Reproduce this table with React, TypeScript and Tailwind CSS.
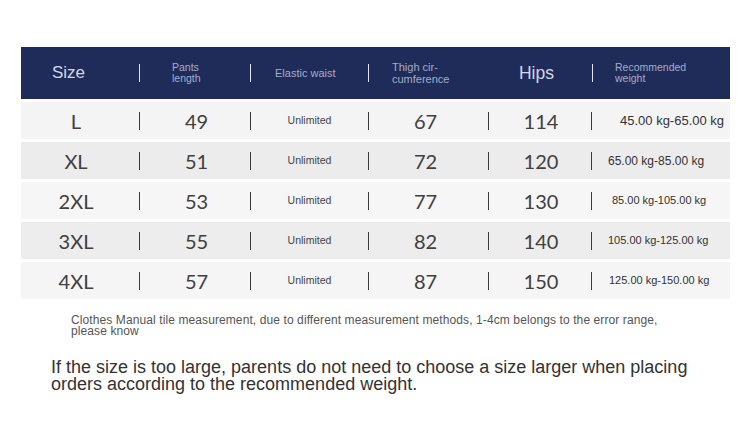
import React from 'react';

const rows = [
  { size: 'L', pants: '49', thigh: '67', hips: '114', weight: '45.00 kg-65.00 kg', bg: 'bg-[#f4f4f4]', wCls: 'text-[13px] pl-[28px]' },
  { size: 'XL', pants: '51', thigh: '72', hips: '120', weight: '65.00 kg-85.00 kg', bg: 'bg-[#ececec]', wCls: 'text-[12px] pl-[16px]' },
  { size: '2XL', pants: '53', thigh: '77', hips: '130', weight: '85.00 kg-105.00 kg', bg: 'bg-[#f6f6f6]', wCls: 'text-[11px] pl-[20px]' },
  { size: '3XL', pants: '55', thigh: '82', hips: '140', weight: '105.00 kg-125.00 kg', bg: 'bg-[#ededed]', wCls: 'text-[11px] pl-[16px]' },
  { size: '4XL', pants: '57', thigh: '87', hips: '150', weight: '125.00 kg-150.00 kg', bg: 'bg-[#f5f5f5]', wCls: 'text-[11px] pl-[17px]' },
];

const Sep = ({ light }: { light?: boolean }) => (
  <span className={`w-px h-[18px] shrink-0 ${light ? 'bg-[#dfe3ee]' : 'bg-[#3a3a3a]'}`} />
);

const num = "text-center text-[20px] font-normal text-[#404040] font-['Lato',sans-serif]";

const App: React.FC = () => {
  return (
    <div className="w-[750px] h-[431px] bg-white pt-[47px] pl-[21px] font-['Liberation_Sans',Arial,sans-serif]">
      <div className="w-[709px]">
        {/* header */}
        <div className="flex items-center h-[52px] bg-[#1f2c59]">
          <div className="w-[118px] shrink-0 pl-[31px] text-[17px] text-[#d3d8e6]">Size</div>
          <Sep light />
          <div className="w-[110px] shrink-0 pl-[32px] text-[10.5px] leading-[11px] text-[#a3acc9]">
            Pants<br />length
          </div>
          <Sep light />
          <div className="w-[117px] shrink-0 pl-[24px] text-[11px] text-[#a3acc9]">Elastic waist</div>
          <Sep light />
          <div className="w-[223px] shrink-0 flex items-center">
            <div className="w-[120px] pl-[23px] text-[11px] leading-[12px] text-[#a3acc9]">
              Thigh cir-<br />cumference
            </div>
            <div className="flex-1 text-center pr-[8px] text-[17.5px] text-[#d3d8e6]">Hips</div>
          </div>
          <Sep light />
          <div className="flex-1 pl-[22px] text-[10.5px] leading-[11px] text-[#a3acc9]">
            Recommended<br />weight
          </div>
        </div>

        {/* rows */}
        <div className="flex flex-col gap-[3px] mt-[3px]">
          {rows.map((r) => (
            <div key={r.size} className={`flex items-center h-[37px] ${r.bg}`}>
              <div className={`w-[118px] shrink-0 pr-[8px] ${num}`}>{r.size}</div>
              <Sep />
              <div className={`w-[110px] shrink-0 pl-[3px] ${num}`}>{r.pants}</div>
              <Sep />
              <div className="w-[117px] shrink-0 text-center text-[10.5px] text-[#444]">Unlimited</div>
              <Sep />
              <div className={`w-[119px] shrink-0 pr-[6px] ${num}`}>{r.thigh}</div>
              <Sep />
              <div className={`w-[102px] shrink-0 pl-[2px] ${num}`}>{r.hips}</div>
              <Sep />
              <div className={`flex-1 text-[#333] whitespace-nowrap ${r.wCls}`}>{r.weight}</div>
            </div>
          ))}
        </div>
      </div>

      <div className="w-[600px] ml-[50px] mt-[16px] text-[12px] tracking-[0.1px] leading-[11px] text-[#555]">
        Clothes Manual tile measurement, due to different measurement methods, 1-4cm belongs to the error range,
        please know
      </div>
      <div className="w-[650px] ml-[30px] mt-[22px] text-[18px] leading-[17px] text-[#333]">
        If the size is too large, parents do not need to choose a size larger when placing orders according to the
        recommended weight.
      </div>
    </div>
  );
};

export default App;
